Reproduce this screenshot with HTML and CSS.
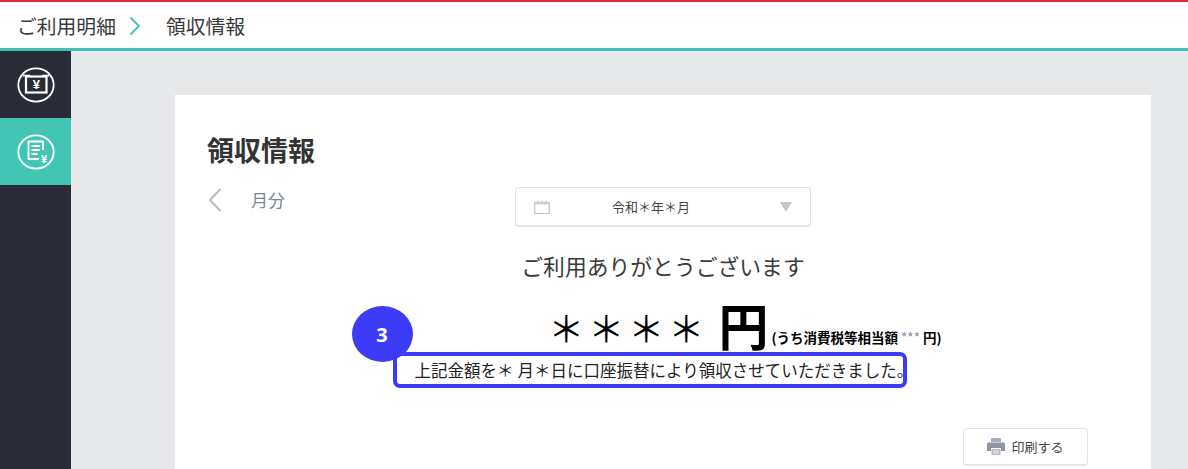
FILE: index.html
```html
<!DOCTYPE html>
<html lang="ja">
<head>
<meta charset="utf-8">
<title>領収情報</title>
<link rel="stylesheet" href="styles.css">
</head>
<body>
<header class="topbar">
  <span class="crumb">ご利用明細</span>
  <svg class="crumb-sep" width="12" height="20" viewBox="0 0 12 20"><path d="M1.5 1.5 L10 10 L1.5 18.5" fill="none" stroke="#3fc4b3" stroke-width="1.8"/></svg>
  <span class="crumb">領収情報</span>
</header>
<div class="shell">
  <nav class="sidebar">
    <div class="nav-item">
      <svg width="38" height="36" viewBox="0 0 38 36"><ellipse cx="19" cy="18" rx="17.7" ry="16.6" fill="none" stroke="#fff" stroke-width="1.8"/><path d="M13 8.500H6.500v1M25 8.500h6.500v1" fill="none" stroke="#fff" stroke-width="1.5"/><rect x="9" y="9.500" width="20.500" height="16" fill="none" stroke="#fff" stroke-width="2.200"/><text x="19.300" y="22" class="yen">¥</text></svg>
    </div>
    <div class="nav-item active">
      <svg width="38" height="36" viewBox="0 0 38 36"><ellipse cx="19" cy="18" rx="17.700" ry="16.600" fill="none" stroke="#fff" stroke-width="1.800"/><path d="M22 25H11.500V7.500H26V16" fill="none" stroke="#fff" stroke-width="1.800"/><path d="M14.500 12h8.500M14.500 16h8.500M14.500 20h6" stroke="#fff" stroke-width="1.800"/><text x="27" y="28.500" class="yen small">¥</text></svg>
    </div>
  </nav>
  <main class="content">
    <section class="card">
      <h1 class="title">領収情報</h1>
      <div class="period-row">
        <div class="month">
          <svg width="16" height="26" viewBox="0 0 16 26"><path d="M13.500 2 L3 13 L13.500 24" fill="none" stroke="#b9bec8" stroke-width="2.400"/></svg>
          <span>月分</span>
        </div>
        <div class="select">
          <svg width="16" height="14" viewBox="0 0 16 14"><path d="M.7 2.500h14.600v11H.7z" fill="none" stroke="#bfc2ca" stroke-width="1.200"/><path d="M.7 2.500h14.600v2H.7z" fill="#d3d5da"/><path d="M4 .5v3M8 .5v3M12 .5v3" stroke="#bfc2ca"/></svg>
          <span class="select-label">令和＊年＊月</span>
          <span class="select-arrow"></span>
        </div>
      </div>
      <div class="summary">
        <p class="thanks">ご利用ありがとうございます</p>
        <div class="amount-row">
          <span class="amount">＊＊＊＊</span><span class="yen-big">円</span>
          <span class="tax">(うち消費税等相当額 <em>***</em> 円)</span>
        </div>
        <div class="highlight">
          <span class="badge">3</span>
          <span>上記金額を＊<span class="gap">月</span>＊日に口座振替により領収させていただきました。</span>
        </div>
      </div>
      <div class="actions">
        <button class="print" type="button">
          <svg width="18" height="17" viewBox="0 0 18 17"><path d="M4 0h10v4H4z" fill="#aab0bb"/><path d="M1.500 4.500h15a1.500 1.500 0 0 1 1.500 1.500v7h-4v-3H4v3H0V6a1.500 1.500 0 0 1 1.500-1.500z" fill="#8e96a3"/><path d="M4.500 11h9v6h-9z" fill="#b4bac4"/><path d="M6 13h6M6 15h6" stroke="#fff" stroke-width=".8"/></svg>
          <span>印刷する</span>
        </button>
      </div>
    </section>
  </main>
</div>
</body>
</html>
```
FILE: styles.css
```css
* { box-sizing: border-box; }
html, body { margin: 0; height: 100%; overflow: hidden; }
body {
  font-family: "Noto Sans CJK JP", "Noto Sans", sans-serif;
  color: #333;
  background: #fff;
  display: flex;
  flex-direction: column;
}
.topbar {
  height: 51px;
  flex: none;
  display: flex;
  align-items: center;
  padding-left: 17px;
  padding-top: 2px;
  background: #fff;
  border-top: 2px solid #e2293f;
  border-bottom: 3px solid #3fc4b3;
}
.crumb { font-size: 19.800px; color: #3a3a3a; line-height: 1; }
.crumb-sep { margin: 0 25px 0 13px; }
.shell { flex: 1; display: flex; min-height: 0; }
.sidebar { width: 71px; flex: none; background: #292c36; }
.nav-item {
  height: 67px;
  display: flex;
  align-items: center;
  justify-content: center;
}
.nav-item.active { background: #43c5b3; }
.yen { font-family: "Liberation Sans", sans-serif; font-size: 13px; font-weight: 700; fill: #fff; text-anchor: middle; }
.yen.small { font-size: 11px; }
.content { flex: 1; background: #e7e8ea; padding: 44px 37px 0 104px; min-width: 0; }
.card { background: #fff; height: 100%; padding: 36px 32px 0; }
.title { margin: 0; font-size: 27px; font-weight: 700; line-height: 38px; color: #333; }
.period-row {
  display: grid;
  grid-template-columns: 1fr auto 1fr;
  align-items: start;
  margin-top: 18px;
}
.month {
  display: flex;
  align-items: center;
  gap: 28px;
  height: 26px;
  font-size: 17px;
  line-height: 24px;
  color: #7d8391;
}
.select {
  width: 296px;
  height: 40px;
  display: flex;
  align-items: center;
  padding: 0 18px;
  background: #fff;
  border: 1px solid #e3e4e8;
  border-bottom-width: 2px;
  border-radius: 4px;
}
.select-label { flex: 1; text-align: center; font-size: 13px; color: #444; padding-right: 28px; }
.select-arrow {
  width: 0;
  height: 0;
  border-left: 6.500px solid transparent;
  border-right: 6.500px solid transparent;
  border-top: 10px solid #c4c6cb;
}
.summary { display: flex; flex-direction: column; align-items: center; margin-top: 20px; }
.thanks { margin: 0; font-size: 21.800px; line-height: 38px; color: #3a3a3a; }
.amount-row { display: flex; align-items: flex-end; height: 64px; margin-top: 4px; margin-left: 164px; color: #000; white-space: nowrap; }
.amount { font-size: 36px; line-height: 50px; letter-spacing: 4px; margin-bottom: 1px; }
.yen-big { font-size: 50px; font-weight: 700; line-height: 54px; margin: 0 3px 2px 10px; }
.tax { font-size: 13.500px; font-weight: 700; line-height: 20px; margin-bottom: 6px; }
.tax em { font-style: normal; color: #8b8f99; font-weight: 400; }
.highlight {
  position: relative;
  width: 514px;
  height: 36px;
  margin-top: -1px;
  margin-left: -27px;
  padding-left: 18px;
  display: flex;
  align-items: center;
  font-size: 16.500px;
  color: #222;
  white-space: nowrap;
  border: 4px solid #3c3cf8;
  border-radius: 7px;
}
.gap { margin-left: 4px; }
.badge {
  position: absolute;
  left: -45px;
  top: -50px;
  width: 61px;
  height: 56px;
  border-radius: 50%;
  background: #3c3cf8;
  color: #fff;
  display: flex;
  align-items: center;
  justify-content: center;
  font: 700 20px "Open Sans", sans-serif;
}
.actions { display: flex; justify-content: flex-end; margin-top: 40px; padding-right: 31px; }
.print {
  width: 125px;
  height: 38px;
  display: flex;
  align-items: center;
  justify-content: center;
  gap: 6px;
  background: #fff;
  border: 1px solid #e3e4e8;
  border-bottom-width: 2px;
  border-radius: 4px;
  font-family: inherit;
  font-size: 13px;
  color: #444;
  padding: 0;
}
```
